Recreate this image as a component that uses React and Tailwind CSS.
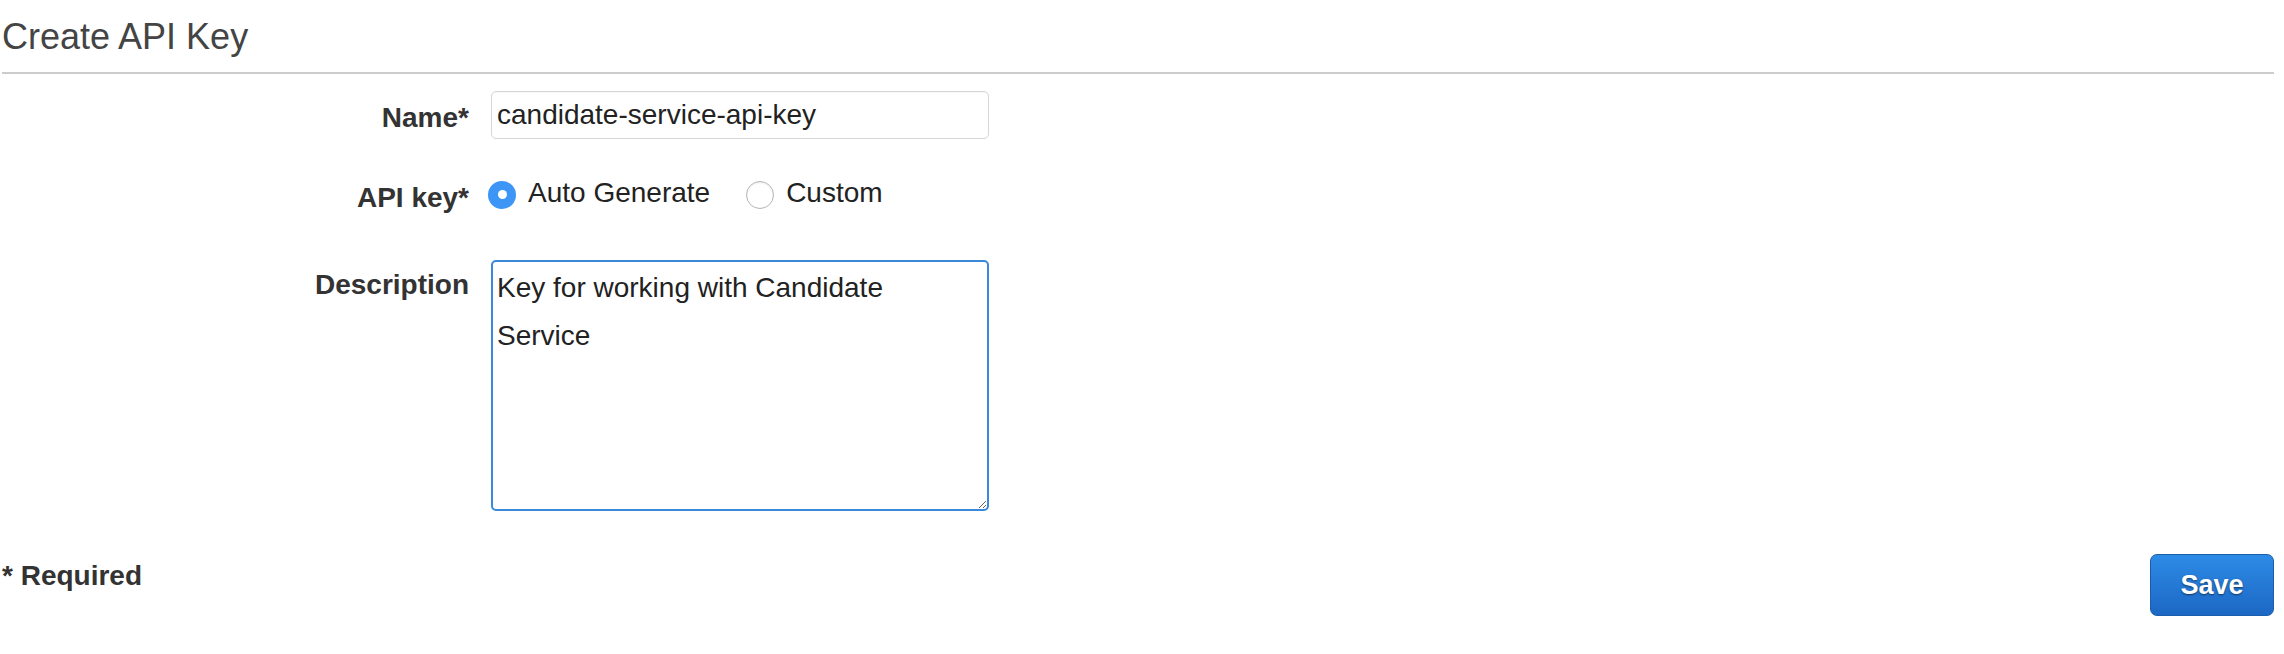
import { useState } from 'react';

const LABEL = 'w-[467px] shrink-0 text-right font-bold text-[28px] leading-[32px] text-[#333]';

function Radio({ checked, label, onSelect }) {
  return (
    <button type="button" onClick={onSelect} className="flex items-center gap-[12px] cursor-pointer">
      {checked ? (
        <span className="w-[28px] h-[28px] rounded-full bg-[#3d96f6] flex items-center justify-center mt-[3px]">
          <span className="w-[9px] h-[9px] rounded-full bg-white" />
        </span>
      ) : (
        <span className="w-[28px] h-[28px] rounded-full bg-white border border-[#b5b5b5] shadow-[inset_0_1px_2px_rgba(0,0,0,0.08)] mt-[3px]" />
      )}
      <span className="text-[28px] leading-[32px] text-[#222]">{label}</span>
    </button>
  );
}

export default function App() {
  const [name, setName] = useState('candidate-service-api-key');
  const [mode, setMode] = useState('auto');
  const [desc, setDesc] = useState('Key for working with Candidate Service');

  return (
    <div className="min-h-screen bg-white pl-[2px] pr-[10px] font-['Liberation_Sans',Arial,sans-serif]">
      <h1 className="pt-[17px] pb-[15px] text-[36px] leading-[40px] text-[#444] border-b-2 border-[#cccccc]">
        Create API Key
      </h1>

      <div className="pt-[17px]">
        <div className="flex">
          <label className={`${LABEL} pt-[11px]`}>Name*</label>
          <input
            type="text"
            value={name}
            onChange={(e) => setName(e.target.value)}
            className="ml-[22px] w-[498px] h-[48px] px-[5px] border border-[#d6d6d6] rounded-[5px] text-[28px] text-[#222] outline-none shadow-[inset_0_1px_1px_rgba(0,0,0,0.04)]"
          />
        </div>

        <div className="flex mt-[38px]">
          <label className={`${LABEL} pt-[5px]`}>API key*</label>
          <div className="ml-[22px] -translate-x-[3px] flex items-start gap-[36px] h-[32px]">
            <Radio checked={mode === 'auto'} label="Auto Generate" onSelect={() => setMode('auto')} />
            <Radio checked={mode === 'custom'} label="Custom" onSelect={() => setMode('custom')} />
          </div>
        </div>

        <div className="flex mt-[46px]">
          <label className={`${LABEL} pt-[9px]`}>Description</label>
          <textarea
            value={desc}
            onChange={(e) => setDesc(e.target.value)}
            className="ml-[22px] w-[498px] h-[251px] pl-[4px] pr-[14px] pt-[2px] border-2 border-[#3a88d8] rounded-[5px] text-[28px] leading-[48px] text-[#222] outline-none"
          />
        </div>

        <div className="flex justify-between items-start mt-[43px]">
          <span className="mt-[6px] font-bold text-[28px] leading-[32px] text-[#333]">* Required</span>
          <button
            type="button"
            className="w-[124px] h-[62px] rounded-[7px] border border-[#1a5daa] bg-gradient-to-b from-[#2d8be6] to-[#1c68c4] text-white font-bold text-[27px] [text-shadow:0_1px_2px_rgba(0,0,0,0.55)]"
          >
            Save
          </button>
        </div>
      </div>
    </div>
  );
}
